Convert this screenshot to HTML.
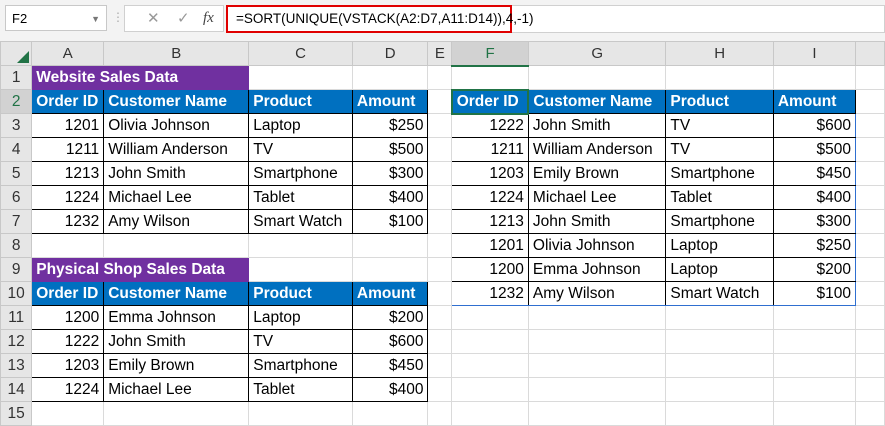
<!DOCTYPE html>
<html><head><style>
body{margin:0;width:885px;height:424px;overflow:hidden;background:#fff;font-family:"Liberation Sans",sans-serif;position:relative}
.top{position:absolute;left:0;top:0;width:885px;height:41px;background:#f3f3f3;border-bottom:1px solid #d0d0d0}
.nb{position:absolute;left:5px;top:5px;width:102px;height:26px;background:#fff;border:1px solid #c8c8c8;font-size:13px;line-height:26px;padding-left:6px;box-sizing:border-box}
.fx{position:absolute;left:124px;top:5px;width:100px;height:27px;background:#fff;border:1px solid #d0d0d0;box-sizing:border-box;font-size:15px;color:#999;line-height:25px}
.fb{position:absolute;left:226px;top:5px;width:659px;height:28px;background:#fff;border:1px solid #d0d0d0;box-sizing:border-box}
.red{position:absolute;left:226px;top:5px;width:286px;height:28px;border:2px solid #e00000;box-sizing:border-box;font-size:13.5px;line-height:24px;padding-left:8px;background:#fff}
table{position:absolute;left:0;top:41px;border-collapse:collapse;table-layout:fixed;font-size:15.5px}
tr{height:24px}
td{padding:0 4px;border:1px solid #dadada;white-space:nowrap;overflow:hidden}
tr.h td{background:#e6e6e6;text-align:center;color:#333;border-color:#c8c8c8;font-size:15px}
td.r{background:#e6e6e6;text-align:center;color:#333;border-color:#c8c8c8;padding:0}
td.p{background:#7030a0;color:#fff;font-weight:bold;border-color:#7030a0}
td.b{background:#0070c0;color:#fff;font-weight:bold;border:1px solid #000}
td.d{border:1px solid #000}
td.n{text-align:right}
td.g{border:1px solid #000;border-left-color:#2f6fd0}
td.gr{border:1px solid #000;border-right-color:#2f6fd0}
tr.last td.g2{border-bottom-color:#2f6fd0}
</style></head><body>
<div class="top"></div>
<div class="nb">F2<span style="position:absolute;right:6px;color:#777;font-size:9px">▼</span></div>
<div style="position:absolute;left:112px;top:10px;color:#aaa;font-size:12px">⋮</div>
<div class="fx"><span style="position:absolute;left:22px">✕</span><span style="position:absolute;left:52px">✓</span><span style="position:absolute;left:78px;color:#444;font-style:italic;font-family:'Liberation Serif',serif">fx</span></div>
<div class="fb"></div>
<div class="red">=SORT(UNIQUE(VSTACK(A2:D7,A11:D14)),4,-1)</div>
<table>
<colgroup><col style="width:32px"><col style="width:72px"><col style="width:146px"><col style="width:104px"><col style="width:76px"><col style="width:24px"><col style="width:77px"><col style="width:138px"><col style="width:108px"><col style="width:83px"><col style="width:30px"></colgroup>
<tr class="h"><td style="position:relative"><span style="position:absolute;right:2px;bottom:2px;width:0;height:0;border-left:12px solid transparent;border-bottom:12px solid #217346"></span></td><td>A</td><td>B</td><td>C</td><td>D</td><td>E</td><td style="color:#217346;border-bottom:2px solid #217346;background:#d2d2d2">F</td><td>G</td><td>H</td><td>I</td><td></td></tr>
<tr><td class="r">1</td><td class="p" colspan="2">Website Sales Data</td><td></td><td></td><td></td><td></td><td></td><td></td><td></td><td></td></tr>
<tr><td class="r" style="color:#217346;background:#d2d2d2">2</td><td class="b">Order ID</td><td class="b">Customer Name</td><td class="b">Product</td><td class="b">Amount</td><td></td><td class="b" style="border:2px solid #217346">Order ID</td><td class="b">Customer Name</td><td class="b">Product</td><td class="b">Amount</td><td></td></tr>
<tr><td class="r">3</td><td class="d n">1201</td><td class="d">Olivia Johnson</td><td class="d">Laptop</td><td class="d n">$250</td><td></td><td class="g n">1222</td><td class="d">John Smith</td><td class="d">TV</td><td class="gr n">$600</td><td></td></tr>
<tr><td class="r">4</td><td class="d n">1211</td><td class="d">William Anderson</td><td class="d">TV</td><td class="d n">$500</td><td></td><td class="g n">1211</td><td class="d">William Anderson</td><td class="d">TV</td><td class="gr n">$500</td><td></td></tr>
<tr><td class="r">5</td><td class="d n">1213</td><td class="d">John Smith</td><td class="d">Smartphone</td><td class="d n">$300</td><td></td><td class="g n">1203</td><td class="d">Emily Brown</td><td class="d">Smartphone</td><td class="gr n">$450</td><td></td></tr>
<tr><td class="r">6</td><td class="d n">1224</td><td class="d">Michael Lee</td><td class="d">Tablet</td><td class="d n">$400</td><td></td><td class="g n">1224</td><td class="d">Michael Lee</td><td class="d">Tablet</td><td class="gr n">$400</td><td></td></tr>
<tr><td class="r">7</td><td class="d n">1232</td><td class="d">Amy Wilson</td><td class="d">Smart Watch</td><td class="d n">$100</td><td></td><td class="g n">1213</td><td class="d">John Smith</td><td class="d">Smartphone</td><td class="gr n">$300</td><td></td></tr>
<tr><td class="r">8</td><td></td><td></td><td></td><td></td><td></td><td class="g n">1201</td><td class="d">Olivia Johnson</td><td class="d">Laptop</td><td class="gr n">$250</td><td></td></tr>
<tr><td class="r">9</td><td class="p" colspan="2">Physical Shop Sales Data</td><td></td><td></td><td></td><td class="g n">1200</td><td class="d">Emma Johnson</td><td class="d">Laptop</td><td class="gr n">$200</td><td></td></tr>
<tr class="last"><td class="r">10</td><td class="b">Order ID</td><td class="b">Customer Name</td><td class="b">Product</td><td class="b">Amount</td><td></td><td class="g g2 n">1232</td><td class="d g2">Amy Wilson</td><td class="d g2">Smart Watch</td><td class="gr g2 n">$100</td><td></td></tr>
<tr><td class="r">11</td><td class="d n">1200</td><td class="d">Emma Johnson</td><td class="d">Laptop</td><td class="d n">$200</td><td></td><td></td><td></td><td></td><td></td><td></td></tr>
<tr><td class="r">12</td><td class="d n">1222</td><td class="d">John Smith</td><td class="d">TV</td><td class="d n">$600</td><td></td><td></td><td></td><td></td><td></td><td></td></tr>
<tr><td class="r">13</td><td class="d n">1203</td><td class="d">Emily Brown</td><td class="d">Smartphone</td><td class="d n">$450</td><td></td><td></td><td></td><td></td><td></td><td></td></tr>
<tr><td class="r">14</td><td class="d n">1224</td><td class="d">Michael Lee</td><td class="d">Tablet</td><td class="d n">$400</td><td></td><td></td><td></td><td></td><td></td><td></td></tr>
<tr><td class="r">15</td><td></td><td></td><td></td><td></td><td></td><td></td><td></td><td></td><td></td><td></td></tr>
</table>
</body></html>
